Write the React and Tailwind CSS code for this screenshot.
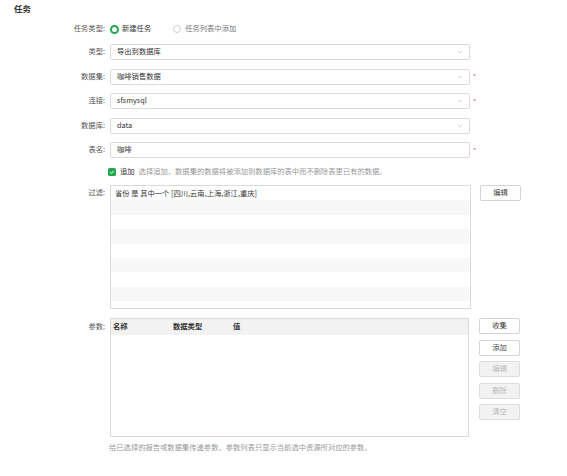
import { ChevronDown } from 'lucide-react';

const font = { fontFamily: '"Noto Sans CJK SC", "Noto Sans", sans-serif' };

function Label({ children }) {
  return <div className="w-[106px] shrink-0 pr-[1px] text-right text-[#555]">{children}</div>;
}

function Required() {
  return <span className="ml-[3px] text-[#f0506e] text-[7px] leading-none">*</span>;
}

function Field({ label, value, select, required }) {
  return (
    <div className="flex items-center h-[16px]">
      <Label>{label}</Label>
      <div className="ml-[4px] w-[360px] h-[16px] flex items-center justify-between border border-[#dadada] rounded-[2px] bg-white pl-[6px] pr-[5px] text-[#333]">
        <span>{value}</span>
        {select && <ChevronDown className="w-[8px] h-[8px] text-[#aaa]" strokeWidth={1.5} />}
      </div>
      {required && <Required />}
    </div>
  );
}

function Btn({ children, disabled }) {
  return (
    <div
      className={
        'w-[41px] h-[16px] flex items-center justify-center rounded-[2px] border ' +
        (disabled ? 'bg-[#f2f2f2] border-[#dedede] text-[#bbb]' : 'bg-white border-[#d4d4d4] text-[#444]')
      }
    >
      {children}
    </div>
  );
}

export default function App() {
  const fields = [
    { label: '类型:', value: '导出到数据库', select: true },
    { label: '数据集:', value: '咖啡销售数据', select: true, required: true },
    { label: '连接:', value: 'sfsmysql', select: true, required: true },
    { label: '数据库:', value: 'data', select: true },
    { label: '表名:', value: '咖啡', required: true },
  ];

  return (
    <div className="w-[567px] h-[476px] bg-white text-[7.3px] leading-none" style={font}>
      {/* 标题 */}
      <div className="h-[17px] flex items-center pl-[14px] text-[8.5px] font-bold text-[#333]">任务</div>

      {/* 任务类型 */}
      <div className="mt-[4px] h-[16px] flex items-center">
        <Label>任务类型:</Label>
        <div className="ml-[4px] flex items-center">
          <span className="w-[9px] h-[9px] rounded-full border-[2.5px] border-[#22a94f] bg-white" />
          <span className="ml-[3px] text-[#333]">新建任务</span>
          <span className="ml-[22px] w-[8px] h-[8px] rounded-full border border-[#d0d0d0] bg-white" />
          <span className="ml-[4px] text-[#777]">任务列表中添加</span>
        </div>
      </div>

      {/* 输入项 */}
      <div className="mt-[7px] flex flex-col gap-[8.5px]">
        {fields.map((f) => (
          <Field key={f.label} {...f} />
        ))}
      </div>

      {/* 追加 */}
      <div className="mt-[6px] h-[16px] flex items-center">
        <div className="w-[108px] shrink-0" />
        <span className="w-[8px] h-[8px] rounded-[1.5px] bg-[#25a74f] flex items-center justify-center">
          <svg viewBox="0 0 10 10" className="w-[6px] h-[6px]">
            <path d="M2 5.2 L4.2 7.3 L8 3" fill="none" stroke="white" strokeWidth="1.6" />
          </svg>
        </span>
        <span className="ml-[4px] text-[#333]">追加</span>
        <span className="ml-[4px] text-[#999]">选择追加，数据集的数据将被添加到数据库的表中而不删除表里已有的数据。</span>
      </div>

      {/* 过滤 */}
      <div className="mt-[5px] flex items-start">
        <div className="pt-[4px]">
          <Label>过滤:</Label>
        </div>
        <div className="ml-[4px] w-[361px] h-[124px] border border-[#dadada] overflow-hidden">
          <div className="h-[14.4px] flex items-center pl-[4px] text-[#333]">省份 是 其中一个 [四川,云南,上海,浙江,重庆]</div>
          {[0, 1, 2, 3, 4, 5, 6, 7].map((i) => (
            <div key={i} className={'h-[14.4px] ' + (i % 2 === 0 ? 'bg-[#f7f7f7]' : 'bg-white')} />
          ))}
        </div>
        <div className="ml-[9px]">
          <Btn>编辑</Btn>
        </div>
      </div>

      {/* 参数 */}
      <div className="mt-[9px] flex items-start">
        <div className="pt-[5px]">
          <Label>参数:</Label>
        </div>
        <div className="ml-[4px] w-[359px] h-[119px] border border-[#dadada]">
          <div className="h-[16px] bg-[#f2f2f2] flex items-center pl-[2px] font-bold text-[#333]">
            <span className="w-[60px]">名称</span>
            <span className="w-[60px]">数据类型</span>
            <span>值</span>
          </div>
        </div>
        <div className="ml-[10px] flex flex-col gap-[5.5px]">
          <Btn>收集</Btn>
          <Btn>添加</Btn>
          <Btn disabled>编辑</Btn>
          <Btn disabled>删除</Btn>
          <Btn disabled>清空</Btn>
        </div>
      </div>

      {/* 说明 */}
      <div className="mt-[7px] pl-[109px] text-[#999]">给已选择的报告或数据集传递参数，参数列表只显示当前选中资源所对应的参数。</div>
    </div>
  );
}
